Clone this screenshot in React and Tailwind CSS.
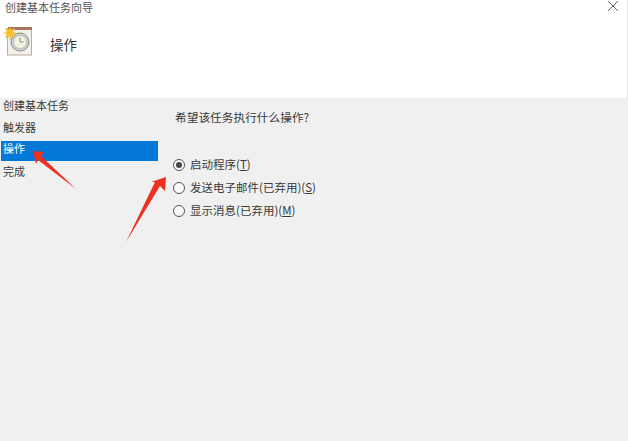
const font = { fontFamily: '"Noto Sans CJK SC", "Liberation Sans", sans-serif' };

function TaskIcon() {
  return (
    <svg width="34" height="34" viewBox="0 0 34 34" className="absolute left-0 top-[24px]">
      <rect x="7.5" y="4.5" width="24" height="26.5" fill="#f3f0e9" stroke="#b9aea0" />
      <rect x="8" y="3" width="24" height="3" fill="#a5755f" />
      <circle cx="20" cy="18" r="9" fill="#c6d0d6" stroke="#8b8f90" />
      <circle cx="20" cy="18" r="6.5" fill="#f4f3df" stroke="#a8adad" strokeWidth="0.6" />
      <path d="M20 13.5v4.5h3.5" fill="none" stroke="#8a8a78" strokeWidth="1" />
      <g stroke="#f6b21b" strokeWidth="1.2">
        <path d="M10 2.5v13M3.5 9h13M5.5 4.5l9 9M14.5 4.5l-9 9" />
      </g>
      <circle cx="10" cy="9" r="4" fill="#fbc02d" />
    </svg>
  );
}

function Radio({ label, checked }) {
  return (
    <label className="flex items-center h-[23px] gap-[5px]">
      <span className="w-[12px] h-[12px] rounded-full border border-[#555] bg-[#fafafa] flex items-center justify-center">
        {checked && <span className="w-[6px] h-[6px] rounded-full bg-[#444]" />}
      </span>
      <span>{label}</span>
    </label>
  );
}

export default function App() {
  return (
    <div className="relative w-[628px] h-[441px] overflow-hidden bg-[#f0f0f0] text-[#3a3a3a] text-[11px] leading-none" style={font}>
      <header className="relative h-[98px] bg-white border-r border-[#e4e4e4]">
        <div className="pl-[5px] pt-[2px] h-[14px] text-[#555]">创建基本任务向导</div>
        <TaskIcon />
        <div className="pl-[50px] pt-[21px] text-[13.5px] leading-[18px] text-[#333]">操作</div>
        <svg width="10" height="10" viewBox="0 0 10 10" className="absolute left-[608px] top-[1px]">
          <path d="M0 0l10 10M10 0L0 10" stroke="#555" strokeWidth="0.9" />
        </svg>
      </header>
      <div className="flex">
        <nav className="w-[157px] ml-[1px] -mt-[4px] flex flex-col">
          <div className="h-[22px] flex items-center pl-[2px]">创建基本任务</div>
          <div className="h-[22px] flex items-center pl-[2px]">触发器</div>
          <div className="h-[20px] mt-[3px] pb-[5px] flex items-center pl-[2px] bg-[#0478d7] text-white">操作</div>
          <div className="h-[20px] flex items-center pl-[2px]">完成</div>
        </nav>
        <main className="pl-[15px] pt-[11px] text-[11.5px]">
          <div className="pl-[2px] h-[44px] text-[11.7px] leading-[16px]">希望该任务执行什么操作?</div>
          <div className="flex flex-col">
            <Radio checked label={<>启动程序(<u>T</u>)</>} />
            <Radio label={<>发送电子邮件(已弃用)(<u>S</u>)</>} />
            <Radio label={<>显示消息(已弃用)(<u>M</u>)</>} />
          </div>
        </main>
      </div>
      <svg width="628" height="441" viewBox="0 0 628 441" className="absolute inset-0 pointer-events-none">
        <path d="M33 151L44 152L41 156L76 189L38 160L36 164Z" fill="#f0301f" />
        <path d="M166 177L165 191L160 186L126 242L155 182L151 182Z" fill="#f0301f" />
      </svg>
    </div>
  );
}
